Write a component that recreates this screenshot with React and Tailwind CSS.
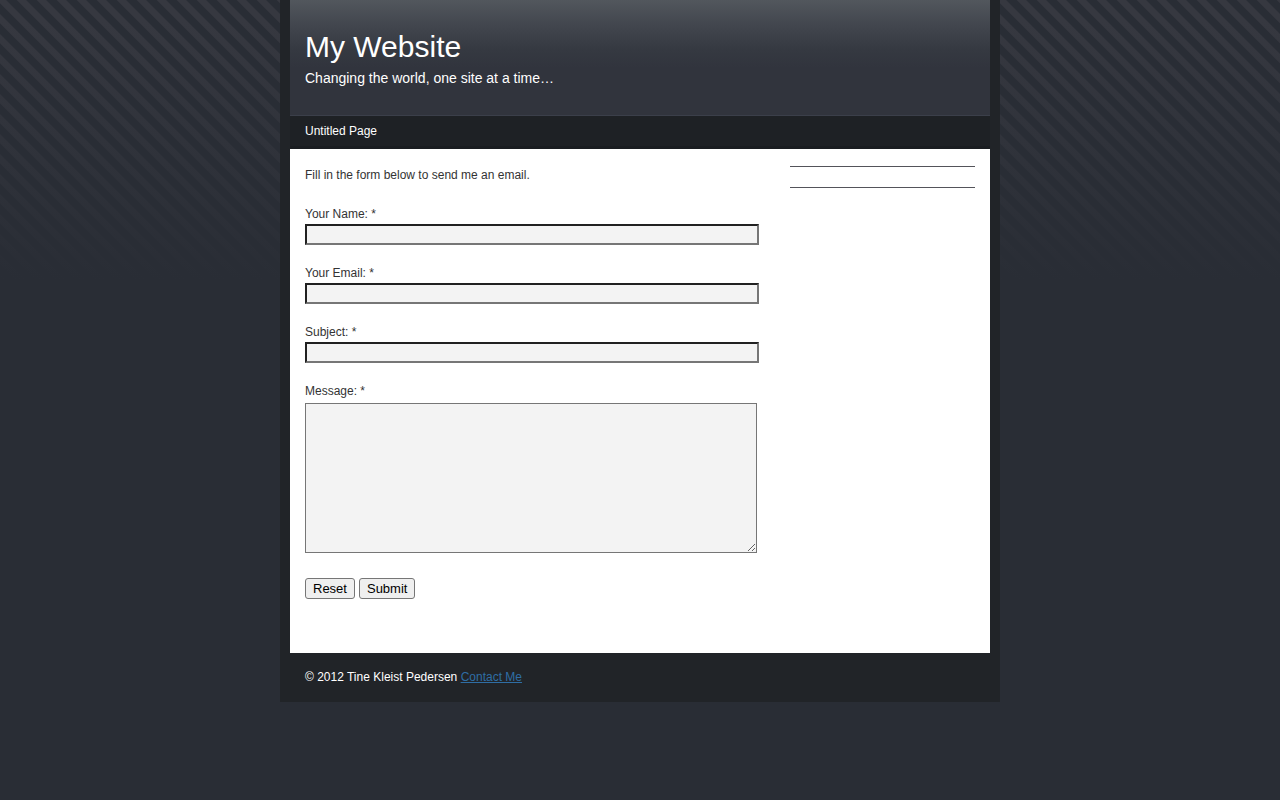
import React from 'react';

const inputClass =
  'mt-px block h-[21px] w-full border-2 border-t-[#212121] border-l-[#212121] border-r-[#767676] border-b-[#767676] bg-[#f3f3f3] px-1 text-xs text-black outline-none';
const buttonClass =
  'h-[21px] rounded-[3px] border border-[#767676] bg-[#efefef] px-[7px] text-[13px] leading-[19px] text-black';

function TextField({ id, label, type = 'text' }) {
  return (
    <div>
      <label htmlFor={id} className="block leading-[18px]">{label}</label>
      <input id={id} name={id} type={type} required className={inputClass} />
    </div>
  );
}

function Header() {
  return (
    <header className="border-b border-[#3b3f4a] bg-[#31343d] bg-[linear-gradient(to_bottom,#52575d_0px,#42464e_25px,#353941_50px,#31343d_68px)] px-[15px] pt-[29px] pb-[26px] text-white">
      <h1 className="text-[30px] leading-9">My Website</h1>
      <p className="mt-[3px] text-[14px] leading-[21px]">Changing the world, one site at a time…</p>
    </header>
  );
}

export default function App() {
  return (
    <div className="min-h-screen bg-[#292d35] bg-[linear-gradient(to_bottom,transparent_20px,#292d35),linear-gradient(45deg,#363840_0_14%,transparent_16%_41%,#363840_43%_64%,transparent_66%_91%,#363840_93%)] [background-repeat:repeat-x,repeat] [background-size:100%_280px,20px_20px] font-['Liberation_Sans',Arial,sans-serif] text-xs text-[#333]">
      <div className="min-h-screen [background:linear-gradient(transparent_0_280px,#292d35_280px)]">
        <div className="mx-auto max-w-[720px] bg-[#212428] px-[10px]">
          <Header />
          <nav className="border-b-[3px] border-[#1a1d21] bg-[#1e2125] px-[15px] py-1.5 text-white">
            <a href="#" className="block leading-[18px]">Untitled Page</a>
          </nav>
          <main className="flex justify-between bg-white px-[15px] pt-[17px] pb-[54px]">
            <section className="w-[454px]">
              <p className="leading-[18px]">Fill in the form below to send me an email.</p>
              <form className="mt-[21px]" onSubmit={(e) => e.preventDefault()}>
                <div className="flex flex-col gap-[19px]">
                  <TextField id="name" label="Your Name: *" />
                  <TextField id="email" label="Your Email: *" type="email" />
                  <TextField id="subject" label="Subject: *" />
                  <div>
                    <label htmlFor="message" className="block leading-[18px]">Message: *</label>
                    <textarea
                      id="message"
                      name="message"
                      required
                      className="mt-[3px] block h-[150px] w-[452px] resize border border-[#767676] bg-[#f3f3f3] p-0.5 text-xs text-black outline-none"
                    />
                  </div>
                </div>
                <div className="mt-[25px] flex gap-1">
                  <button type="reset" className={buttonClass}>Reset</button>
                  <button type="submit" className={buttonClass}>Submit</button>
                </div>
              </form>
            </section>
            <aside className="w-[185px]">
              <div className="h-[22px] border-y border-[#54545a]" />
            </aside>
          </main>
          <footer className="px-[15px] pt-[15px] pb-4 leading-[18px] text-white">
            © 2012 Tine Kleist Pedersen{' '}
            <a href="#contact" className="text-[#2f6ea5] underline">Contact Me</a>
          </footer>
        </div>
      </div>
    </div>
  );
}
